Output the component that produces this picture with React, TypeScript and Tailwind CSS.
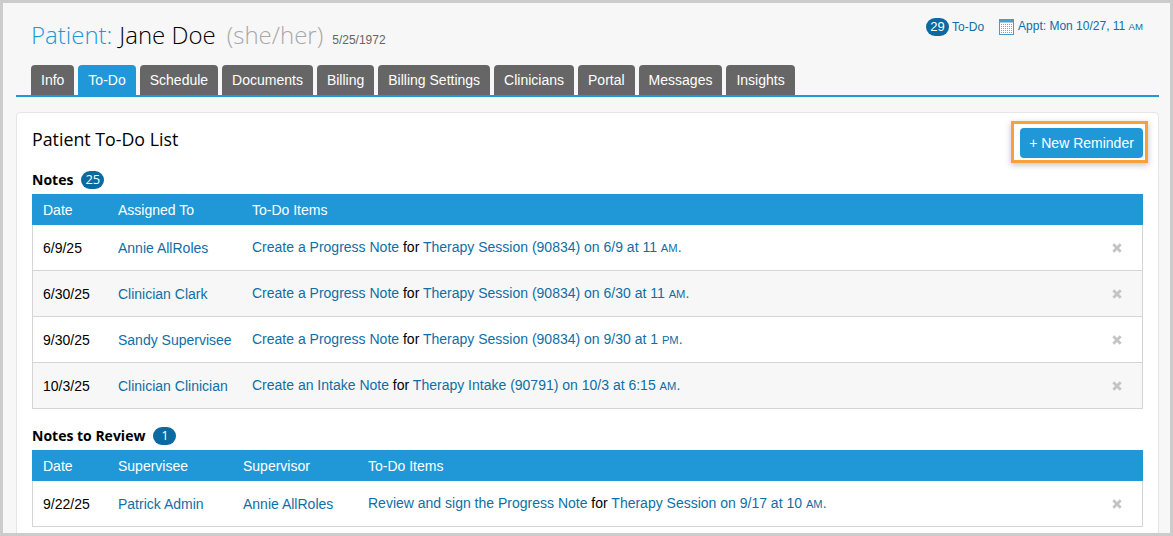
import { ReactNode } from "react";

const tabs = ["Info", "To-Do", "Schedule", "Documents", "Billing", "Billing Settings", "Clinicians", "Portal", "Messages", "Insights"];

const Link = ({ children }: { children: ReactNode }) => <span className="text-[#0f6ea6]">{children}</span>;
const Caps = ({ children }: { children: ReactNode }) => <span className="text-[0.8em] uppercase">{children}</span>;

function Badge({ n, className = "" }: { n: number; className?: string }) {
  return (
    <span className={`inline-flex h-[18px] min-w-[23px] items-center justify-center rounded-[9px] bg-[#0a6aa1] px-[4px] text-[13px] leading-none text-white ${className}`}>
      {n}
    </span>
  );
}

function CloseX() {
  return (
    <svg width="10" height="10" viewBox="0 0 10 10" className="block">
      <path d="M1.3 1.3 8.7 8.7M8.7 1.3 1.3 8.7" stroke="#c4c4c4" strokeWidth="2.8" />
    </svg>
  );
}

function CalendarIcon() {
  const xs = [2, 4, 6, 8, 10, 12];
  const ys = [5, 7, 9, 11, 13];
  return (
    <svg width="15" height="16" viewBox="0 0 15 16" className="block">
      <rect x="0.5" y="0.5" width="14" height="15" fill="#fff" stroke="#4f9ac8" />
      <rect x="1" y="1" width="13" height="2.5" fill="#4f9ac8" />
      {ys.map((y) => xs.map((x) => <rect key={`${x}-${y}`} x={x} y={y} width="1" height="1" fill="#9a9a9a" />))}
    </svg>
  );
}

function Row({ cols, date, cells, items, shaded }: { cols: string; date: string; cells: string[]; items: ReactNode; shaded?: boolean }) {
  return (
    <div className={`grid h-[46px] items-center border-b border-[#d5d5d5] pl-[10px] ${cols} ${shaded ? "bg-[#f7f7f7]" : "bg-white"}`}>
      <span className="text-black">{date}</span>
      {cells.map((c) => (
        <Link key={c}>{c}</Link>
      ))}
      <span className="text-black">{items}</span>
      <span className="flex justify-end pr-[20px]">
        <CloseX />
      </span>
    </div>
  );
}

function Head({ cols, labels }: { cols: string; labels: string[] }) {
  return (
    <div className={`grid h-[31px] items-center bg-[#2098d8] pl-[11px] text-white ${cols}`}>
      {labels.map((l) => (
        <span key={l}>{l}</span>
      ))}
    </div>
  );
}

const notesCols = "grid-cols-[75px_134px_1fr_40px]";
const reviewCols = "grid-cols-[75px_125px_125px_1fr_40px]";

const note = (a: string, b: string, rest: ReactNode) => (
  <>
    <Link>{a}</Link> for <Link>{b} {rest}</Link>
  </>
);

export default function App() {
  return (
    <div className="h-[536px] w-[1173px] overflow-hidden border-[3px] border-[#cccccc] bg-[#f7f7f7] font-['Liberation_Sans',Arial,sans-serif] text-[14px] leading-5">
      <div className="flex h-[62px] items-start justify-between pr-[27px] pl-[28px]">
        <div className="mt-[17px] flex items-baseline font-['Open_Sans',sans-serif] text-[24px] font-light leading-[30px]">
          <span className="text-[#2098d8]">Patient:</span>
          <span className="ml-[7px] text-black">Jane Doe</span>
          <span className="ml-[11px] text-[#a8a8a8]">(she/her)</span>
          <span className="ml-[9px] font-['Liberation_Sans',sans-serif] text-[12px] font-normal text-[#666666]">5/25/1972</span>
        </div>
        <div className="mt-[13px] flex items-center text-[12px] text-[#0f6ea6]">
          <Badge n={29} className="mr-[3px] h-[17px]" />
          <span>To-Do</span>
          <span className="mr-[4px] ml-[15px]"><CalendarIcon /></span>
          <span>Appt: Mon 10/27, 11 <Caps>am</Caps></span>
        </div>
      </div>

      <div className="mr-[11px] ml-[13px] flex h-[32px] gap-[4px] border-b-2 border-[#2098d8] pl-[15px]">
        {tabs.map((t) => (
          <div
            key={t}
            className={`flex h-[30px] items-center rounded-t-[4px] px-[10px] text-white ${t === "To-Do" ? "bg-[#2098d8]" : "bg-[#666666]"}`}
          >
            {t}
          </div>
        ))}
      </div>

      <div className="mt-[15px] mr-[11px] ml-[13px] h-[500px] rounded-[4px] border border-[#e6e6e6] bg-white px-[15px]">
        <div className="flex items-start justify-between">
          <h2 className="mt-[13px] font-['Open_Sans',sans-serif] text-[17.8px] leading-[26px] text-black">Patient To-Do List</h2>
          <div className="relative mt-[15px]">
            <button className="block h-[30px] w-[123px] rounded-[4px] bg-[#2098d8] text-white">+ New Reminder</button>
            {/* highlight drawn over the button */}
            <span className="absolute -top-[7px] -right-[5px] -bottom-[5px] -left-[9px] border-[3px] border-[#f9a03c] shadow-[0_2px_6px_rgba(80,80,110,0.35)]" />
          </div>
        </div>

        <div className="mt-[9px] flex h-[27px] items-center pb-[2px] font-['Open_Sans',sans-serif] text-[14px] font-bold text-black">
          Notes
          <Badge n={25} className="ml-[8px] font-normal" />
        </div>
        <Head cols={notesCols} labels={["Date", "Assigned To", "To-Do Items"]} />
        <div className="border-x border-[#d5d5d5]">
          <Row cols={notesCols} date="6/9/25" cells={["Annie AllRoles"]} items={note("Create a Progress Note", "Therapy Session (90834) on 6/9 at 11", <><Caps>am</Caps>.</>)} />
          <Row cols={notesCols} shaded date="6/30/25" cells={["Clinician Clark"]} items={note("Create a Progress Note", "Therapy Session (90834) on 6/30 at 11", <><Caps>am</Caps>.</>)} />
          <Row cols={notesCols} date="9/30/25" cells={["Sandy Supervisee"]} items={note("Create a Progress Note", "Therapy Session (90834) on 9/30 at 1", <><Caps>pm</Caps>.</>)} />
          <Row cols={notesCols} shaded date="10/3/25" cells={["Clinician Clinician"]} items={note("Create an Intake Note", "Therapy Intake (90791) on 10/3 at 6:15", <><Caps>am</Caps>.</>)} />
        </div>

        <div className="mt-[14px] flex h-[27px] items-center pb-[2px] font-['Open_Sans',sans-serif] text-[14px] font-bold text-black">
          Notes to Review
          <Badge n={1} className="ml-[8px] font-normal" />
        </div>
        <Head cols={reviewCols} labels={["Date", "Supervisee", "Supervisor", "To-Do Items"]} />
        <div className="border-x border-[#d5d5d5]">
          <Row cols={reviewCols} date="9/22/25" cells={["Patrick Admin", "Annie AllRoles"]} items={note("Review and sign the Progress Note", "Therapy Session on 9/17 at 10", <><Caps>am</Caps>.</>)} />
        </div>
      </div>
    </div>
  );
}
